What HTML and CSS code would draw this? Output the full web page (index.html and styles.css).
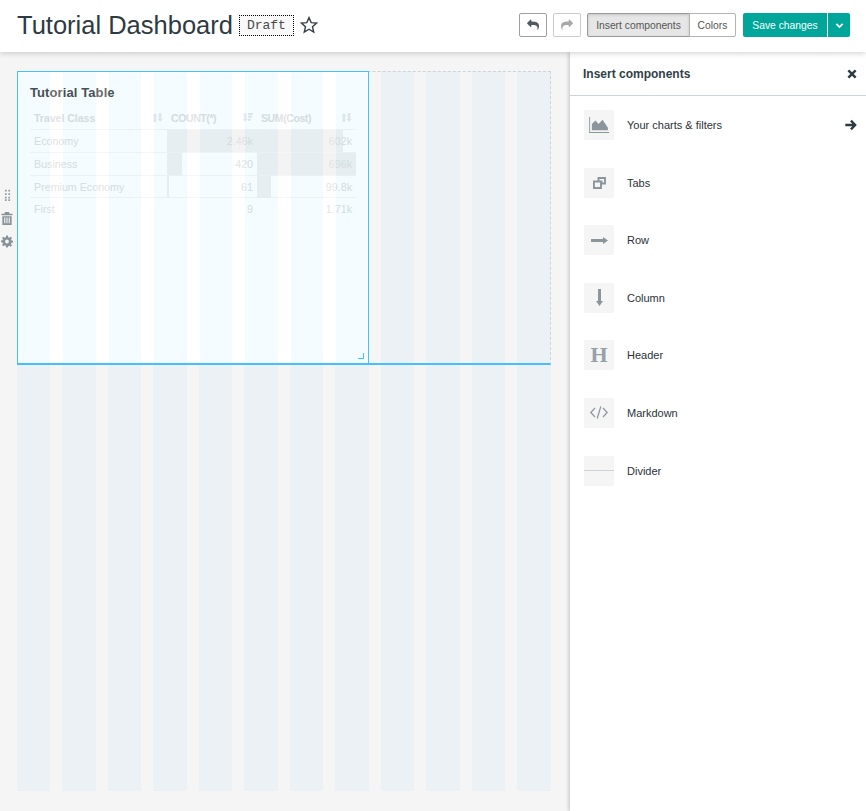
FILE: index.html
```html
<!DOCTYPE html>
<html lang="en">
<head>
<meta charset="utf-8">
<title>Tutorial Dashboard</title>
<link rel="stylesheet" href="styles.css">
</head>
<body>
<header class="topbar">
  <div class="title-group">
    <h1 class="title">Tutorial Dashboard</h1>
    <span class="draft">Draft</span>
    <svg class="star" viewBox="0 0 18 18"><path d="M9 1.6l2.2 5 5.4.5-4.1 3.6 1.2 5.3L9 13.2 4.3 16l1.2-5.3L1.4 7.1l5.4-.5z"/></svg>
  </div>
  <div class="actions">
    <button class="btn icon-btn"><svg class="reply" viewBox="0 0 1792 1792"><path d="M1792 1120q0 166-127 451-3 7-10.5 24t-13.5 30-13 22q-12 17-28 17-15 0-23.5-10t-8.5-25q0-9 2.5-26.5t2.5-23.5q5-68 5-123 0-101-17.5-181t-48.5-138.5-80-101-105.5-69.5-133-42.5-154-21.5-175.5-6h-224v256q0 26-19 45t-45 19-45-19l-512-512q-19-19-19-45t19-45l512-512q19-19 45-19t45 19 19 45v256h224q713 0 875 403 53 134 53 333z"/></svg></button>
    <button class="btn icon-btn muted"><svg class="reply mirror" viewBox="0 0 1792 1792"><path d="M1792 1120q0 166-127 451-3 7-10.5 24t-13.5 30-13 22q-12 17-28 17-15 0-23.5-10t-8.5-25q0-9 2.5-26.5t2.5-23.5q5-68 5-123 0-101-17.5-181t-48.5-138.5-80-101-105.5-69.5-133-42.5-154-21.5-175.5-6h-224v256q0 26-19 45t-45 19-45-19l-512-512q-19-19-19-45t19-45l512-512q19-19 45-19t45 19 19 45v256h224q713 0 875 403 53 134 53 333z"/></svg></button>
    <div class="toggle">
      <button class="btn toggle-on">Insert components</button>
      <button class="btn toggle-off">Colors</button>
    </div>
    <div class="save">
      <button class="save-main">Save changes</button>
      <button class="save-caret"><svg viewBox="0 0 10 10"><path d="M1.5 3.200L5 6.700l3.500-3.500"/></svg></button>
    </div>
  </div>
</header>

<div class="workspace">
  <main class="canvas">
    <div class="grid-area">
      <div class="row">
        <section class="chart">
          <h2 class="chart-title">Tutorial Table</h2>
          <div class="tbl">
            <div class="tr th">
              <div class="cell">Travel Class<svg class="sort" viewBox="0 0 12 12"><path d="M3.200 1l2.800 3.500H4.600V11H1.800V4.500H.4zM8.800 11L6 7.500h1.400V1h2.800v6.500h1.400z"/></svg></div>
              <div class="cell small">COUNT(*)<svg class="sort" viewBox="0 0 12 12"><path d="M3.200 11L.4 7.500h1.400V1h2.800v6.500H6zM6.500 1H12v2.200H6.500zM6.500 4.200H11v2.200H6.500zM6.500 7.400H9.500v2.200h-3z"/></svg></div>
              <div class="cell small">SUM(Cost)<svg class="sort" viewBox="0 0 12 12"><path d="M3.200 1l2.800 3.500H4.600V11H1.800V4.500H.4zM8.800 11L6 7.500h1.400V1h2.800v6.500h1.400z"/></svg></div>
            </div>
            <div class="tr">
              <div class="cell">Economy</div>
              <div class="cell num"><i class="bar" style="width:100%"></i><span>2.46k</span></div>
              <div class="cell num"><i class="bar" style="width:87%"></i><span>602k</span></div>
            </div>
            <div class="tr">
              <div class="cell">Business</div>
              <div class="cell num"><i class="bar" style="width:17%"></i><span>420</span></div>
              <div class="cell num"><i class="bar" style="width:100%"></i><span>696k</span></div>
            </div>
            <div class="tr">
              <div class="cell">Premium Economy</div>
              <div class="cell num"><i class="bar" style="width:2%"></i><span>61</span></div>
              <div class="cell num"><i class="bar" style="width:14%"></i><span>99.8k</span></div>
            </div>
            <div class="tr last">
              <div class="cell">First</div>
              <div class="cell num"><span>9</span></div>
              <div class="cell num"><span>1.71k</span></div>
            </div>
          </div>
          <span class="resize"></span>
          <div class="hover-tools">
            <svg class="drag" viewBox="0 0 8 14"><path d="M1 1h2v2H1zM5 1h2v2H5zM1 5h2v2H1zM5 5h2v2H5zM1 9h2v2H1zM5 9h2v2H5zM1 12h2v2H1zM5 12h2v2H5z"/></svg>
            <svg class="tool" viewBox="0 0 12 14"><path d="M4 0h4l1 2h3v1.500H0V2h3zM1 4.500h10V14H1zM3 6v6h1.200V6zM5.400 6v6h1.200V6zM7.800 6v6H9V6z" fill-rule="evenodd"/></svg>
            <svg class="tool" viewBox="0 0 14 14"><path d="M6 0h2l.4 2 1.300.5L11.400 1.400l1.400 1.400-1.100 1.700.5 1.300 2 .4v2l-2 .4-.5 1.300 1.100 1.700-1.400 1.400-1.700-1.100-1.300.5L8 14H6l-.4-2-1.300-.5-1.700 1.100-1.400-1.400 1.100-1.700-.5-1.300-2-.4V6l2-.4.5-1.300L1.200 2.800l1.400-1.400 1.700 1.100 1.300-.5zM7 4.800a2.200 2.200 0 1 0 0 4.400 2.200 2.200 0 0 0 0-4.400z" fill-rule="evenodd"/></svg>
          </div>
        </section>
      </div>
    </div>
  </main>

  <aside class="panel">
    <div class="panel-head">
      <span>Insert components</span>
      <svg class="close" viewBox="0 0 10 10"><path d="M2.200.5L5 3.300 7.800.5l1.700 1.700L6.700 5l2.800 2.800-1.700 1.700L5 6.700 2.200 9.500.5 7.800 3.300 5 .5 2.200z"/></svg>
    </div>
    <ul class="items">
      <li class="item">
        <span class="ico"><svg class="i-chart" viewBox="0 0 22 18"><path d="M3 15V8l4-4 3.500 4L15 3l6 9v3z"/><path d="M0 0h1v17h22v1H0z"/></svg></span>
        <span class="label">Your charts &amp; filters</span>
        <svg class="go" viewBox="0 0 12 12"><path d="M6.800.7l5 5.300-5 5.300-1.700-1.700 2.200-2.300H.3V4.700h7L5.100 2.400z"/></svg>
      </li>
      <li class="item">
        <span class="ico"><svg class="i-tabs" viewBox="0 0 13 12"><path d="M5.500 1h6.500v5.500H8.500V4.500h-3zM.9 4.500h7.100v6.500H.9z" fill="none" stroke-width="1.900"/></svg></span>
        <span class="label">Tabs</span>
      </li>
      <li class="item">
        <span class="ico"><svg class="i-row" viewBox="0 0 17 7"><path d="M0 2h12V0l5 3.500L12 7V5H0z"/></svg></span>
        <span class="label">Row</span>
      </li>
      <li class="item">
        <span class="ico"><svg class="i-col" viewBox="0 0 7 17"><path d="M2 0h3v12h2l-3.500 5L0 12h2z"/></svg></span>
        <span class="label">Column</span>
      </li>
      <li class="item">
        <span class="ico ico-h">H</span>
        <span class="label">Header</span>
      </li>
      <li class="item">
        <span class="ico"><svg class="i-code" viewBox="0 0 18 13"><path d="M5 2L.8 6.500 5 11M13 2l4.200 4.500L13 11M10.800.5L7.200 12.500" fill="none" stroke-width="1.200"/></svg></span>
        <span class="label">Markdown</span>
      </li>
      <li class="item">
        <span class="ico ico-div"><i class="rule"></i></span>
        <span class="label">Divider</span>
      </li>
    </ul>
  </aside>
</div>
</body>
</html>
```
FILE: styles.css
```css
* { box-sizing: border-box; }
html, body { margin: 0; height: 100%; }
body {
  font-family: "Liberation Sans", Arial, sans-serif;
  color: #323f47;
  background: #f5f5f5;
  display: flex;
  flex-direction: column;
  height: 811px;
  overflow: hidden;
}
.topbar {
  height: 52px;
  flex: none;
  background: #fff;
  display: flex;
  justify-content: space-between;
  align-items: center;
  padding: 0 16px 2px 17px;
  box-shadow: 0 1px 6px rgba(0,0,0,.2);
  position: relative;
  z-index: 2;
}
.title-group { display: flex; align-items: center; }
.title { margin: 0; font-size: 25.500px; font-weight: 400; color: #2e3a42; line-height: 30px; }
.draft {
  margin-left: 6px;
  width: 55px;
  height: 21px;
  border: 1px dotted #000;
  background: #f8f8f8;
  font-family: "Liberation Mono", monospace;
  font-size: 13px;
  line-height: 19px;
  text-align: center;
  color: #484848;
}
.star { width: 18px; height: 18px; margin-left: 6px; fill: none; stroke: #323f47; stroke-width: 1.400; }
.actions { display: flex; align-items: center; }
.btn {
  font-family: inherit;
  font-size: 10.300px;
  height: 24px;
  padding: 0;
  background: #fff;
  color: #555;
  border: 1px solid #b3b3b3;
  border-radius: 2px;
}
.icon-btn { width: 28px; margin-right: 6px; display: flex; align-items: center; justify-content: center; border-color: #a0a0a0; }
.icon-btn.muted { border-color: #ccc; }
.reply { width: 12px; height: 12px; fill: #505a60; }
.muted .reply { fill: #a8a8a8; }
.mirror { transform: scaleX(-1); }
.toggle { display: flex; }
.toggle-on {
  width: 103px;
  background: #e6e6e6;
  border-color: #999;
  border-radius: 2px 0 0 2px;
  box-shadow: inset 0 1px 3px rgba(0,0,0,.15);
}
.toggle-off { width: 47px; margin-left: -1px; border-radius: 0 2px 2px 0; }
.save { display: flex; margin-left: 7px; }
.save-main, .save-caret {
  height: 24px;
  border: 0;
  padding: 0;
  background: #00a699;
  color: #fff;
  font-family: inherit;
  font-size: 10.300px;
}
.save-main { width: 84px; border-radius: 2px 0 0 2px; }
.save-caret {
  width: 23px;
  border-left: 1px solid #fff;
  border-radius: 0 2px 2px 0;
  display: flex;
  align-items: center;
  justify-content: center;
}
.save-caret svg { width: 9px; height: 9px; fill: none; stroke: #fff; stroke-width: 2; }

.workspace { flex: 1; display: flex; min-height: 0; }
.canvas { width: 570px; flex: none; padding: 19px 19px 20px 17px; }
.grid-area {
  height: 720px;
  width: 534px;
  background: repeating-linear-gradient(90deg, #ecf1f5 0, #ecf1f5 33.500px, transparent 33.500px, transparent 45.500px);
}
.row {
  height: 294px;
  border: 1px dashed #ccd5db;
  border-left: 0;
  border-bottom: 2px solid #44c0ff;
  display: flex;
}
.chart {
  width: 352px;
  height: 292px;
  margin-top: -1px;
  position: relative;
  background: #fff;
  border: 1px solid #44c0ff;
  border-bottom: 0;
  padding: 0 12px;
}
.chart::after {
  content: "";
  position: absolute;
  inset: 0;
  background: repeating-linear-gradient(90deg, rgba(68,200,255,.06) 0, rgba(68,200,255,.06) 32.500px, rgba(255,255,255,.2) 32.500px, rgba(255,255,255,.2) 45.500px);
  pointer-events: none;
}
.chart-title { margin: 13px 0 0; font-size: 13px; line-height: 16px; font-weight: 700; color: #484848; letter-spacing: .1px; }
.tbl { margin-top: 8px; font-size: 10.700px; color: #dcdddd; }
.tr {
  display: grid;
  grid-template-columns: 137px 90px 99px;
  height: 22.750px;
  border-bottom: 1px solid #f3f4f5;
}
.tr.last { border-bottom: 0; }
.tr.th { height: 21px; font-weight: 700; font-size: 10.500px; }
.cell { position: relative; padding: 0 4px; line-height: 22px; white-space: nowrap; }
.th .cell { line-height: 19px; }
.th .small { letter-spacing: -.4px; }
.num { text-align: right; padding-right: 4px; }
.num span { position: relative; }
.bar { position: absolute; left: 0; top: 0; bottom: 0; background: #f0f0f0; }
.sort { position: absolute; right: 4px; top: 3px; width: 11px; height: 11px; fill: #e6e8e9; }
.resize {
  position: absolute;
  right: 4px;
  bottom: 4px;
  width: 6px;
  height: 6px;
  border-right: 1px solid #44c0ff;
  border-bottom: 1px solid #44c0ff;
}
.hover-tools {
  position: absolute;
  left: -18px;
  top: 117px;
  width: 14px;
  display: flex;
  flex-direction: column;
  align-items: center;
  gap: 10.500px;
}
.drag { width: 7px; height: 12px; fill: #8f9aa1; }
.tool { width: 12px; height: 13px; fill: #879399; }

.panel {
  flex: 1;
  background: #fff;
  box-shadow: -1px 0 4px rgba(0,0,0,.22);
  position: relative;
  z-index: 1;
}
.panel-head {
  height: 44px;
  display: flex;
  align-items: center;
  justify-content: space-between;
  padding: 0 9px 0 13px;
  font-size: 12px;
  font-weight: 700;
  color: #323f47;
  border-bottom: 1px solid #ccd5db;
}
.close { width: 10px; height: 10px; fill: #2e3a42; }
.items {
  list-style: none;
  margin: 0;
  padding: 14px 9px 0 14px;
  display: flex;
  flex-direction: column;
  gap: 27.600px;
}
.item { height: 30px; display: flex; align-items: center; font-size: 11px; color: #2b3238; }
.ico {
  width: 30px;
  height: 30px;
  flex: none;
  background: #f5f5f5;
  display: flex;
  align-items: center;
  justify-content: center;
  stroke: #8a969c;
}
.ico svg { fill: #8a969c; stroke: none; }
.label { margin-left: 13px; flex: 1; }
.go { width: 12px; height: 12px; fill: #2e3a42; }
.i-chart { width: 20px; height: 16px; }
.i-tabs { width: 13px; height: 12px; }
.i-tabs path { stroke: #8a969c; }
.i-row { width: 17px; height: 7px; }
.i-col { width: 7px; height: 17px; }
.i-code { width: 18px; height: 13px; }
.i-code path { stroke: #8a969c; }
.ico-h {
  font-family: "Liberation Serif", serif;
  font-size: 22px;
  font-weight: 700;
  color: #95a1a8;
  stroke: none;
}
.rule { display: block; width: 100%; height: 1px; background: #ccd5db; }
```
